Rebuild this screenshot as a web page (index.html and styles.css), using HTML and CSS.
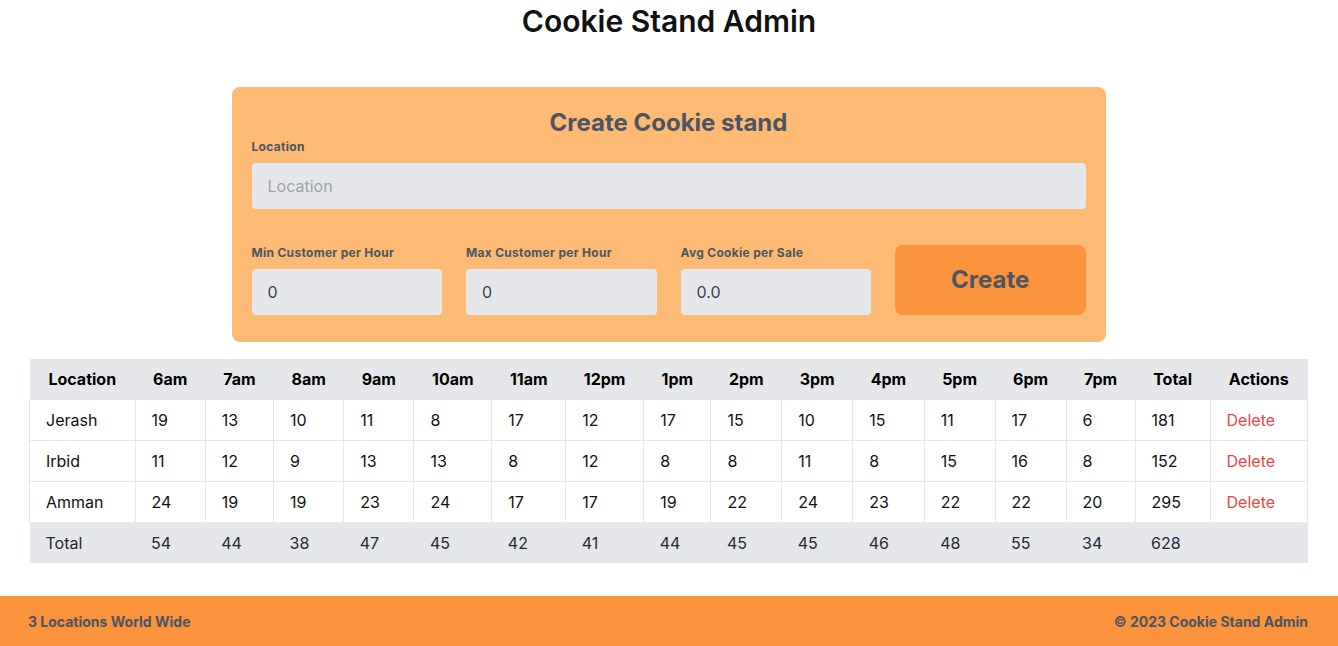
FILE: index.html
```html
<!DOCTYPE html>
<html lang="en">
<head>
<meta charset="utf-8">
<title>Cookie Stand Admin</title>
<link rel="stylesheet" href="styles.css">
</head>
<body>
<header class="site-header">
  <h1 class="site-title">Cookie Stand Admin</h1>
</header>
<main class="main">
  <form class="stand-form">
    <h2 class="form-title">Create Cookie stand</h2>
    <label class="field-label" for="loc">Location</label>
    <input class="field-input" id="loc" type="text" placeholder="Location">
    <div class="form-grid">
      <div class="field">
        <label class="field-label" for="min">Min Customer per Hour</label>
        <input class="field-input" id="min" type="text" value="0">
      </div>
      <div class="field">
        <label class="field-label" for="max">Max Customer per Hour</label>
        <input class="field-input" id="max" type="text" value="0">
      </div>
      <div class="field">
        <label class="field-label" for="avg">Avg Cookie per Sale</label>
        <input class="field-input" id="avg" type="text" value="0.0">
      </div>
      <button class="create-btn" type="button">Create</button>
    </div>
  </form>

  <table class="report">
    <thead>
      <tr>
        <th>Location</th><th>6am</th><th>7am</th><th>8am</th><th>9am</th><th>10am</th><th>11am</th><th>12pm</th><th>1pm</th><th>2pm</th><th>3pm</th><th>4pm</th><th>5pm</th><th>6pm</th><th>7pm</th><th>Total</th><th>Actions</th>
      </tr>
    </thead>
    <tbody>
      <tr>
        <td>Jerash</td><td>19</td><td>13</td><td>10</td><td>11</td><td>8</td><td>17</td><td>12</td><td>17</td><td>15</td><td>10</td><td>15</td><td>11</td><td>17</td><td>6</td><td>181</td><td class="del">Delete</td>
      </tr>
      <tr>
        <td>Irbid</td><td>11</td><td>12</td><td>9</td><td>13</td><td>13</td><td>8</td><td>12</td><td>8</td><td>8</td><td>11</td><td>8</td><td>15</td><td>16</td><td>8</td><td>152</td><td class="del">Delete</td>
      </tr>
      <tr>
        <td>Amman</td><td>24</td><td>19</td><td>19</td><td>23</td><td>24</td><td>17</td><td>17</td><td>19</td><td>22</td><td>24</td><td>23</td><td>22</td><td>22</td><td>20</td><td>295</td><td class="del">Delete</td>
      </tr>
    </tbody>
    <tfoot>
      <tr>
        <td>Total</td><td>54</td><td>44</td><td>38</td><td>47</td><td>45</td><td>42</td><td>41</td><td>44</td><td>45</td><td>45</td><td>46</td><td>48</td><td>55</td><td>34</td><td>628</td><td></td>
      </tr>
    </tfoot>
  </table>
</main>
<footer class="site-footer">
  <span>3 Locations World Wide</span>
  <span>© 2023 Cookie Stand Admin</span>
</footer>
</body>
</html>
```

FILE: styles.css
```css
* { box-sizing: border-box; }
html, body { margin: 0; padding: 0; }
body {
  font-family: Inter, "Noto Sans", sans-serif;
  color: #111827;
  background: #fff;
}
.site-header {
  padding-top: 3px;
}
.site-title {
  margin: 0;
  text-align: center;
  font-size: 30px;
  line-height: 36px;
  font-weight: 600;
  color: #111;
}
.main {
  padding: 0 30px 0 29px;
}
.stand-form {
  width: 874px;
  margin: 48px auto 0;
  background: #fdba74;
  border-radius: 8px;
  padding: 20px 20px 27px;
  display: flex;
  flex-direction: column;
}
.form-title {
  margin: 0;
  text-align: center;
  font-size: 24px;
  line-height: 32px;
  font-weight: 700;
  color: #4b5563;
}
.field-label {
  display: block;
  font-size: 12px;
  line-height: 16px;
  font-weight: 700;
  letter-spacing: 0.3px;
  color: #4b5563;
  margin-bottom: 8px;
}
.field-input {
  display: block;
  width: 100%;
  height: 46px;
  border: none;
  border-radius: 4px;
  background: #e5e7eb;
  padding: 0 16px;
  font-family: Inter, "Noto Sans", sans-serif;
  font-size: 16px;
  color: #374151;
  outline: none;
}
.field-input::placeholder { color: #9ca3af; }
.form-grid {
  margin-top: 36px;
  display: grid;
  grid-template-columns: repeat(4, 1fr);
  gap: 24px;
}
.field { display: flex; flex-direction: column; }
.create-btn {
  border: none;
  border-radius: 8px;
  background: #fb923c;
  color: #4b5563;
  font-family: Inter, "Noto Sans", sans-serif;
  font-size: 24px;
  font-weight: 700;
  padding-bottom: 2px;
  cursor: pointer;
}
.report {
  width: 100%;
  margin-top: 17px;
  border-collapse: collapse;
  font-size: 16px;
}
.report th {
  background: #e5e7eb;
  font-weight: 700;
  color: #000;
  height: 40px;
  padding: 0 16px;
  text-align: center;
}
.report td {
  padding: 8px 16px;
  line-height: 24px;
  text-align: left;
  color: #111;
}
.report tbody td {
  border: 1px solid #e5e7eb;
}
.report tfoot td {
  background: #e5e7eb;
  color: #1f2937;
}
.report td.del { color: #ef4444; }
.site-footer {
  margin-top: 33px;
  height: 50px;
  background: #fb923c;
  padding: 1px 30px 0 28px;
  display: flex;
  align-items: center;
  justify-content: space-between;
  font-size: 14px;
  font-weight: 700;
  color: #4b5563;
}
```
